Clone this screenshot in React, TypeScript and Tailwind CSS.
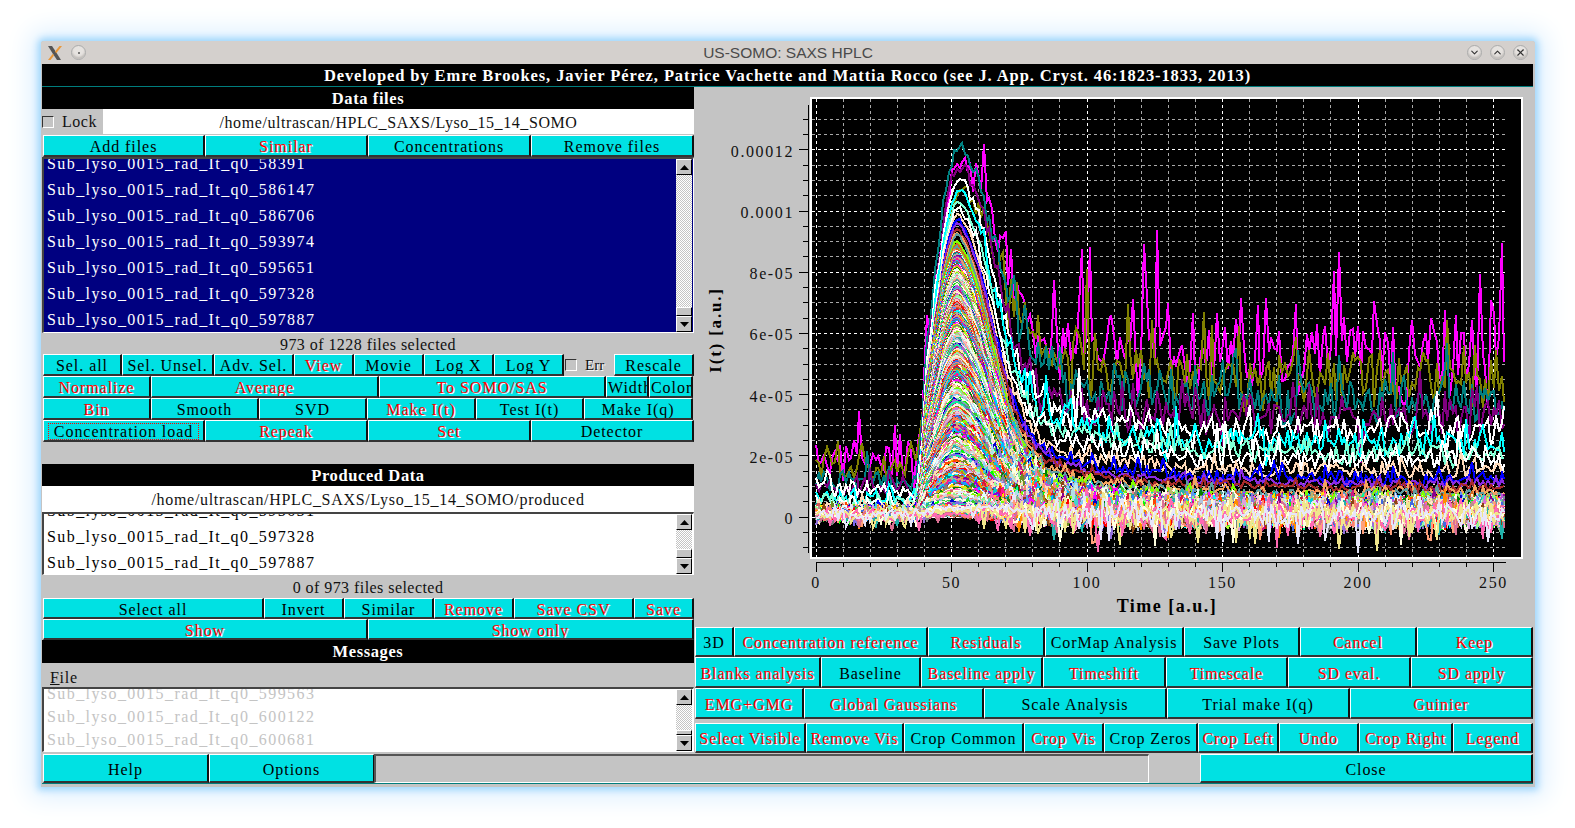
import { useMemo } from "react";
import { ChevronDown, ChevronUp, X } from "lucide-react";

type B = { t: string; red?: boolean; focus?: boolean; left?: boolean };

function rng(seed: number) {
  return () => {
    seed = (seed + 0x6d2b79f5) | 0;
    let t = Math.imul(seed ^ (seed >>> 15), 1 | seed);
    t = (t + Math.imul(t ^ (t >>> 7), 61 | t)) ^ t;
    return ((t ^ (t >>> 14)) >>> 0) / 4294967296;
  };
}

const palette = [
  "#5f9ea0", "#7fff00", "#d2691e", "#ff7f50", "#6495ed", "#fff8dc", "#dc143c", "#00ffff",
  "#008b8b", "#b8860b", "#a9a9a9", "#bdb76b", "#8b008b",
  "#ff8c00", "#9932cc", "#e9967a", "#8fbc8f", "#00ced1",
  "#9400d3", "#ff1493", "#00bfff", "#696969", "#1e90ff", "#b22222", "#fffaf0", "#228b22",
  "#ff00ff", "#dcdcdc", "#ffd700", "#daa520", "#808080", "#008000", "#adff2f", "#f0fff0",
  "#ff69b4", "#cd5c5c", "#fffff0", "#f0e68c", "#e6e6fa", "#7cfc00", "#fffacd",
  "#add8e6", "#f08080", "#e0ffff", "#90ee90", "#d3d3d3", "#ffb6c1", "#ffa07a", "#20b2aa",
  "#87cefa", "#778899", "#b0c4de", "#ffffe0", "#00ff00", "#32cd32", "#faf0e6",
  "#66cdaa", "#0000cd", "#ba55d3", "#9370db", "#3cb371", "#7b68ee", "#00fa9a", "#48d1cc",
  "#c71585", "#ffe4e1", "#ffe4b5", "#ffdead", "#fdf5e6", "#6b8e23", "#ffa500", "#ff4500",
  "#da70d6", "#eee8aa", "#98fb98", "#afeeee", "#db7093", "#ffefd5", "#ffdab9", "#cd853f",
  "#ffc0cb", "#dda0dd", "#b0e0e6", "#ff0000", "#bc8f8f", "#4169e1", "#8b4513", "#fa8072",
];

// color, tail level, level before the peak, noise, peak height (all in 1e-5)
const topCurves: [string, number, number, number, number][] = [
  ["#ff00ff", 5.2, 1.7, 1.2, 11.4],
  ["#808000", 4.5, 1.7, 0.8, 10.6],
  ["#008080", 3.8, 1.2, 0.6, 12.1],
  ["#800080", 3.2, 0.9, 0.55, 11.4],
  ["#ffffff", 2.85, 0.9, 0.42, 11.0],
  ["#00ffff", 2.45, 0.6, 0.38, 10.6],
  ["#7fffd4", 2.1, 0.5, 0.28, 10.3],
  ["#ffffff", 1.85, 0.45, 0.3, 10.1],
  ["#ffdab9", 1.5, 0.35, 0.2, 9.9],
  ["#0000ff", 1.25, 0.3, 0.17, 9.7],
  ["#8a2be2", 1.1, 0.25, 0.12, 9.6],
  ["#a52a2a", 0.95, 0.22, 0.12, 9.4],
  ["#f4a460", 0.8, 0.2, 0.12, 9.3],
  ["#5f9ea0", 0.7, 0.18, 0.12, 9.2],
  ["#7fff00", 0.62, 0.15, 0.1, 9.0],
  ["#d2691e", 0.5, 0.12, 0.1, 8.9],
];

const toX = (t: number) => 816 + t * 2.71;
const toY = (v: number) => 517 - v * 30.6;

function peakShape(t: number) {
  if (t < 52) {
    const cut = Math.min(1, Math.max(0, (t - 37) / 4));
    return cut * Math.exp(-((t - 52) ** 2) / (2 * 9 * 9));
  }
  return (
    0.72 * Math.exp(-((t - 52) ** 2) / (2 * 12 * 12)) +
    0.28 * Math.exp(-(t - 52) / 28)
  );
}

function makeCurves() {
  const r = rng(4711);
  const gauss = () => (r() + r() + r() + r() - 2) * 1.2;
  const out: { color: string; pts: string }[] = [];
  const add = (
    color: string,
    tail: number,
    pre: number,
    noise: number,
    peak: number,
    spike: number,
  ) => {
    const pts: string[] = [];
    for (let t = 0; t <= 254; t++) {
      const ramp = Math.min(1, Math.max(0, (t - 42) / 20));
      const base = pre + (tail - pre) * ramp;
      const a = Math.max(0, peak - (pre + (tail - pre) * 0.5));
      const s = peakShape(t);
      const n = noise * (0.55 + 0.45 * ramp) * (1 - 0.75 * s);
      let v = base + a * s + gauss() * n;
      if (r() < 0.14) v += n * spike * (r() < 0.8 ? 1 : -0.5) * r();
      pts.push(`${toX(t).toFixed(0)},${toY(v).toFixed(0)}`);
    }
    out.push({ color, pts: pts.join(" ") });
  };
  topCurves.forEach(([c, tail, pre, n, p]) => add(c, tail, pre, n, p, 2.8));
  const count = 440;
  for (let i = 0; i < count; i++) {
    const u = i / (count - 1);
    const peak = 8.8 * (1 - u) ** 1.1;
    const tail = 0.45 * (1 - u) ** 1.6;
    add(palette[i % palette.length], tail, 0.08, 0.12 + 0.1 * u, peak, 2.2);
  }
  // noisy low curves that sit on top of everything around zero
  const pale = ["#808080", "#ff69b4", "#9370db", "#20b2aa", "#ff8c00", "#ffa07a", "#db7093", "#f0e68c", "#ffffe0", "#ff69b4", "#f0e68c", "#e6e6fa"];
  pale.forEach((c, i) => add(c, 0.12, 0.08, 0.18 + i * 0.012, 0.12 + (i % 3) * 0.1, -3.6));
  return out;
}

function Plot() {
  const curves = useMemo(makeCurves, []);
  const xMinor: number[] = [];
  for (let t = 0; t <= 250; t += 10) xMinor.push(t);
  const yMinor: number[] = [];
  for (let v = -1; v <= 13; v += 0.5) yMinor.push(v);
  const yLabels: [number, string][] = [
    [12, "0.00012"],
    [10, "0.0001"],
    [8, "8e-05"],
    [6, "6e-05"],
    [4, "4e-05"],
    [2, "2e-05"],
    [0, "0"],
  ];
  return (
    <svg
      viewBox="694 87 839 540"
      className="block h-[540px] w-[839px] shrink-0"
      shapeRendering="crispEdges"
    >
      <defs>
        <clipPath id="plot-area">
          <rect x="812" y="99" width="694" height="458" />
        </clipPath>
      </defs>
      <rect x="811" y="98" width="711" height="460" fill="#000" stroke="#fff" strokeWidth="2" />
      {xMinor.map((t) => (
        <line
          key={t}
          x1={toX(t)}
          x2={toX(t)}
          y1="99"
          y2="557"
          stroke={t % 50 === 0 ? "#fff" : "#a8a8a8"}
          strokeDasharray="3 3"
        />
      ))}
      {yMinor.map((v) => (
        <line
          key={v}
          x1="812"
          x2="1506"
          y1={toY(v)}
          y2={toY(v)}
          stroke={v % 2 === 0 ? "#fff" : "#a8a8a8"}
          strokeDasharray="3 3"
        />
      ))}
      <g clipPath="url(#plot-area)" fill="none" strokeLinejoin="miter">
        {curves.map((c, i) => (
          <polyline key={i} points={c.pts} stroke={c.color} strokeWidth="2" />
        ))}
      </g>
      <line x1="808" x2="808" y1="105" y2="553" stroke="#000" />
      {yMinor.map((v) => (
        <line key={v} x1={v % 2 === 0 ? 799 : 803} x2="808" y1={toY(v)} y2={toY(v)} stroke="#000" />
      ))}
      <line x1="816" x2="1506" y1="562" y2="562" stroke="#000" />
      {xMinor.map((t) => (
        <line key={t} x1={toX(t)} x2={toX(t)} y1="562" y2={t % 50 === 0 ? 572 : 567} stroke="#000" />
      ))}
      <g fontSize="16" letterSpacing="1.6" fill="#111" shapeRendering="auto">
        {yLabels.map(([v, s]) => (
          <text key={s} x="794" y={toY(v) + 7} textAnchor="end">
            {s}
          </text>
        ))}
        {[0, 50, 100, 150, 200, 250].map((t) => (
          <text key={t} x={toX(t)} y="588" textAnchor="middle">
            {t}
          </text>
        ))}
      </g>
      <text x="1167" y="612" textAnchor="middle" fontSize="18" fontWeight="700" letterSpacing="1.5" fill="#000">
        Time [a.u.]
      </text>
      <text
        x="721"
        y="330"
        textAnchor="middle"
        fontSize="17"
        fontWeight="700"
        letterSpacing="1.8"
        fill="#000"
        transform="rotate(-90 721 330)"
      >
        I(t) [a.u.]
      </text>
    </svg>
  );
}

function Btn({ t, red, focus, left }: B) {
  return (
    <button
      className={
        "flex min-w-0 items-center overflow-hidden whitespace-nowrap border-t border-l border-t-white border-l-white border-r-2 border-b-2 border-r-[#111] border-b-[#333] bg-[#00e1e3] pt-[2px] text-[16px] leading-[19px] tracking-[0.95px] " +
        (red ? "text-[#ff0000] [text-shadow:1px_1px_0_#fff] " : "text-[#000] ") +
        (left ? "justify-start pl-px" : "justify-center")
      }
    >
      {focus ? (
        <span className="border border-dotted border-[#ff0000] px-[5px] leading-[15px]">{t}</span>
      ) : (
        t
      )}
    </button>
  );
}

function Row({ cols, items, h }: { cols: string; items: B[]; h: string }) {
  return (
    <div className={"grid pl-px " + cols + " " + h}>
      {items.map((b) => (
        <Btn key={b.t} {...b} />
      ))}
    </div>
  );
}

function Heading({ children, h }: { children: string; h: string }) {
  return (
    <div className={"flex items-center justify-center bg-black pt-[2px] text-[16.5px] font-bold tracking-[0.6px] text-white " + h}>
      {children}
    </div>
  );
}

function Arrow({ up }: { up?: boolean }) {
  return (
    <div className="flex h-[16px] w-[16px] shrink-0 items-center justify-center border-t border-l border-t-white border-l-white border-r border-b border-r-black border-b-black bg-[#c4c4c4]">
      <svg width="9" height="5" viewBox="0 0 9 5">
        <path d={up ? "M4.5 0 9 5H0z" : "M0 0h9L4.5 5z"} fill="#000" />
      </svg>
    </div>
  );
}

function Scrollbar({ thumb }: { thumb: string }) {
  return (
    <div className="flex w-[16px] shrink-0 flex-col">
      <Arrow up />
      <div className="flex-1 bg-[repeating-conic-gradient(#c4c4c4_0_25%,#fff_0_50%)] bg-[length:2px_2px]" />
      <div className={"w-[16px] border-t border-l border-t-white border-l-white border-r border-b border-r-black border-b-black bg-[#c4c4c4] " + thumb} />
      <Arrow />
    </div>
  );
}

function FileList({
  items,
  h,
  thumb,
  tone,
  rowCls,
}: {
  items: string[];
  h: string;
  thumb: string;
  tone: string;
  rowCls: string;
}) {
  return (
    <div className={"flex border-t-2 border-l-2 border-t-[#444] border-l-[#444] border-r border-b border-r-white border-b-white pr-px " + h + " " + tone}>
      <div className="flex min-w-0 flex-1 flex-col justify-end overflow-hidden">
        {items.map((s) => (
          <div key={s} className={"shrink-0 pl-[3px] text-[16px] tracking-[1.42px] " + rowCls}>
            {s}
          </div>
        ))}
      </div>
      <Scrollbar thumb={thumb} />
    </div>
  );
}

function Checkbox() {
  return <span className="block h-[12px] w-[12px] shrink-0 border border-t-[#333] border-l-[#333] border-r-white border-b-white bg-[#c4c4c4]" />;
}

const dataFiles = ["58391", "586147", "586706", "593974", "595651", "597328", "597887"].map(
  (n) => "Sub_lyso_0015_rad_It_q0_" + n,
);

export default function App() {
  return (
    <div className="h-[828px] w-[1575px] overflow-hidden bg-white pt-[41px] pl-[41px] text-[#111] [font-family:'Liberation_Serif',serif]">
      <div className="h-[746px] w-[1494px] rounded-t-[3px] bg-[#c4c4c4] shadow-[0_0_7px_3px_#9fd6fb,0_0_26px_10px_#dcefff]">
        <div className="flex h-[23px] items-center justify-between rounded-t-[3px] bg-[#d4d0cd] px-[6px] [font-family:'Liberation_Sans',sans-serif]">
          <div className="flex w-[110px] items-center gap-[8px]">
            <svg width="16" height="16" viewBox="0 0 16 16">
              <path d="M1 1h4l4 6 5 8h-4L6 9z" fill="#555" />
              <path d="M15 1h-2.500L8 6.500l1.200 1.800zM1 15h2.500l3.500-4.500-1.200-1.800z" fill="#e8983a" />
            </svg>
            <span className="flex h-[15px] w-[15px] items-center justify-center rounded-full border border-[#aaa] bg-[#e6e3e0] shadow-[inset_0_-2px_2px_#c0bcb8]">
              <span className="h-[2px] w-[2px] rounded-full bg-[#555]" />
            </span>
          </div>
          <div className="text-[15.5px] text-[#4a4a4a]">US-SOMO: SAXS HPLC</div>
          <div className="flex w-[110px] items-center justify-end gap-[8px] pr-px">
            {[ChevronDown, ChevronUp, X].map((Icon, i) => (
              <span
                key={i}
                className="flex h-[15px] w-[15px] items-center justify-center rounded-full border border-[#aaa] bg-[#e6e3e0] shadow-[inset_0_-2px_2px_#c0bcb8]"
              >
                <Icon size={11} strokeWidth={2.4} color="#333" />
              </span>
            ))}
          </div>
        </div>

        <div className="ml-px flex h-[23px] w-[1491px] items-start justify-center whitespace-nowrap border-b border-b-[#007d7d] bg-black text-[16.5px] font-bold tracking-[0.9px] text-white">
          Developed by Emre Brookes, Javier Pérez, Patrice Vachette and Mattia Rocco (see J. App. Cryst. 46:1823-1833, 2013)
        </div>

        <div className="ml-px flex w-[1491px]">
          <div className="flex w-[652px] shrink-0 flex-col">
            <Heading h="h-[22px]">Data files</Heading>
            <div className="flex h-[25px] bg-white">
              <div className="flex w-[61px] items-center bg-[#c4c4c4]">
                <Checkbox />
                <span className="ml-[8px] text-[16px] tracking-[0.5px]">Lock</span>
              </div>
              <div className="flex-1 pt-[2px] text-center text-[16px] tracking-[0.58px]">
                /home/ultrascan/HPLC_SAXS/Lyso_15_14_SOMO
              </div>
            </div>
            <Row
              h="mt-px h-[22px]"
              cols="grid-cols-[162px_163px_163px_163px]"
              items={[{ t: "Add files" }, { t: "Similar", red: true }, { t: "Concentrations" }, { t: "Remove files" }]}
            />
            <FileList items={dataFiles} h="h-[176px]" thumb="h-[9px]" tone="bg-[#000080] text-white" rowCls="h-[26px] leading-[28px]" />
            <div className="h-[21px] text-center text-[16px] leading-[24px] tracking-[0.45px]">973 of 1228 files selected</div>
            <div className="flex h-[22px] pl-px">
              <div className="grid flex-1 grid-cols-[79px_92px_80px_60px_70px_70px_70px]">
                <Btn t="Sel. all" />
                <Btn t="Sel. Unsel." />
                <Btn t="Adv. Sel." />
                <Btn t="View" red />
                <Btn t="Movie" />
                <Btn t="Log X" />
                <Btn t="Log Y" />
              </div>
              <div className="flex w-[50px] shrink-0 items-center pl-[1px]">
                <Checkbox />
                <span className="ml-[8px] text-[15px] [text-shadow:1px_1px_0_#fff]">Err</span>
              </div>
              <div className="grid w-[80px] shrink-0">
                <Btn t="Rescale" />
              </div>
            </div>
            <Row
              h="h-[22px]"
              cols="grid-cols-[108px_228px_227px_43px_44px]"
              items={[
                { t: "Normalize", red: true },
                { t: "Average", red: true },
                { t: "To SOMO/SAS", red: true },
                { t: "Width", left: true },
                { t: "Color", left: true },
              ]}
            />
            <Row
              h="h-[22px]"
              cols="grid-cols-[108px_108px_108px_109px_108px_109px]"
              items={[
                { t: "Bin", red: true },
                { t: "Smooth" },
                { t: "SVD" },
                { t: "Make I(t)", red: true },
                { t: "Test I(t)" },
                { t: "Make I(q)" },
              ]}
            />
            <Row
              h="h-[22px]"
              cols="grid-cols-[162px_163px_163px_163px]"
              items={[{ t: "Concentration load", focus: true }, { t: "Repeak", red: true }, { t: "Set", red: true }, { t: "Detector" }]}
            />
            <div className="h-[22px]" />
            <Heading h="h-[22px]">Produced Data</Heading>
            <div className="h-[26px] bg-white pt-[2px] text-center text-[16px] tracking-[0.7px]">
              /home/ultrascan/HPLC_SAXS/Lyso_15_14_SOMO/produced
            </div>
            <FileList
              items={["Sub_lyso_0015_rad_It_q0_595651", "Sub_lyso_0015_rad_It_q0_597328", "Sub_lyso_0015_rad_It_q0_597887"]}
              h="h-[63px]"
              thumb="h-[9px]"
              tone="bg-white text-[#000]"
              rowCls="h-[26px] leading-[30px]"
            />
            <div className="h-[23px] text-center text-[16px] leading-[26px] tracking-[0.45px]">0 of 973 files selected</div>
            <Row
              h="h-[21px]"
              cols="grid-cols-[221px_80px_90px_80px_120px_60px]"
              items={[
                { t: "Select all" },
                { t: "Invert" },
                { t: "Similar" },
                { t: "Remove", red: true },
                { t: "Save CSV", red: true },
                { t: "Save", red: true },
              ]}
            />
            <Row
              h="h-[21px]"
              cols="grid-cols-[325px_326px]"
              items={[
                { t: "Show", red: true },
                { t: "Show only", red: true },
              ]}
            />
            <Heading h="h-[23px]">Messages</Heading>
            <div className="h-[24px] pt-[3px] pl-[8px] text-[16px] leading-[24px] tracking-[0.7px]">
              <span className="underline">F</span>ile
            </div>
            <FileList
              items={["Sub_lyso_0015_rad_It_q0_599563", "Sub_lyso_0015_rad_It_q0_600122", "Sub_lyso_0015_rad_It_q0_600681"]}
              h="h-[65px]"
              thumb="h-[5px]"
              tone="bg-white text-[#c4c4c4]"
              rowCls="h-[23px] leading-[23px]"
            />
          </div>

          <div className="flex w-[839px] shrink-0 flex-col pt-0">
            <Plot />
            <Row
              h="h-[30px]"
              cols="grid-cols-[39px_194px_117px_139px_116px_117px_116px]"
              items={[
                { t: "3D" },
                { t: "Concentration reference", red: true },
                { t: "Residuals", red: true },
                { t: "CorMap Analysis" },
                { t: "Save Plots" },
                { t: "Cancel", red: true },
                { t: "Keep", red: true },
              ]}
            />
            <Row
              h="h-[31px]"
              cols="grid-cols-[126px_100px_122px_123px_122px_123px_122px]"
              items={[
                { t: "Blanks analysis", red: true },
                { t: "Baseline" },
                { t: "Baseline apply", red: true },
                { t: "Timeshift", red: true },
                { t: "Timescale", red: true },
                { t: "SD eval.", red: true },
                { t: "SD apply", red: true },
              ]}
            />
            <Row
              h="h-[31px]"
              cols="grid-cols-[109px_180px_183px_183px_183px]"
              items={[
                { t: "EMG+GMG", red: true },
                { t: "Global Gaussians", red: true },
                { t: "Scale Analysis" },
                { t: "Trial make I(q)" },
                { t: "Guinier", red: true },
              ]}
            />
            <div className="h-[4px]" />
            <Row
              h="h-[30px]"
              cols="grid-cols-[111px_98px_120px_80px_94px_81px_80px_94px_80px]"
              items={[
                { t: "Select Visible", red: true },
                { t: "Remove Vis", red: true },
                { t: "Crop Common" },
                { t: "Crop Vis", red: true },
                { t: "Crop Zeros" },
                { t: "Crop Left", red: true },
                { t: "Undo", red: true },
                { t: "Crop Right", red: true },
                { t: "Legend", red: true },
              ]}
            />
          </div>
        </div>

        <div className="ml-px flex h-[30px] w-[1491px] pt-px">
          <div className="grid w-[332px] shrink-0 grid-cols-[166px_166px] pl-px">
            <Btn t="Help" />
            <Btn t="Options" />
          </div>
          <div className="w-[775px] shrink-0 border-t-2 border-l-2 border-t-[#555] border-l-[#555] border-r border-b border-r-white border-b-white" />
          <div className="w-[51px] shrink-0" />
          <div className="grid flex-1">
            <Btn t="Close" />
          </div>
        </div>
        <div className="ml-px h-px w-[1491px] bg-[#007d7d]" />
      </div>
    </div>
  );
}
